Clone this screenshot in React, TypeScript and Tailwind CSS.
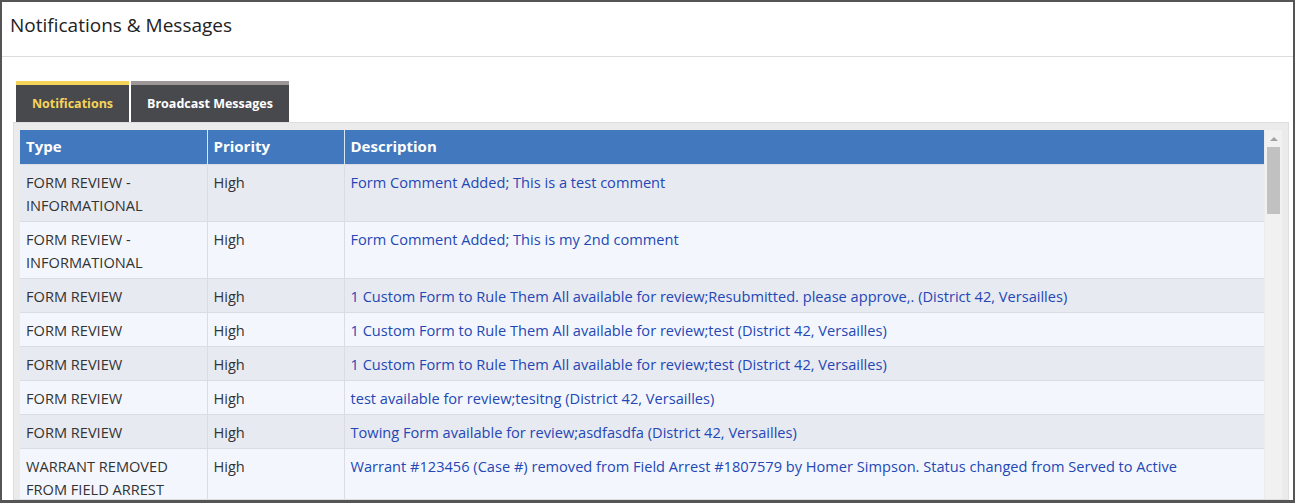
import React from 'react';

type Row = { type: string[]; priority: string; description: string };

const rows: Row[] = [
  { type: ['FORM REVIEW -', 'INFORMATIONAL'], priority: 'High', description: 'Form Comment Added; This is a test comment' },
  { type: ['FORM REVIEW -', 'INFORMATIONAL'], priority: 'High', description: 'Form Comment Added; This is my 2nd comment' },
  { type: ['FORM REVIEW'], priority: 'High', description: '1 Custom Form to Rule Them All available for review;Resubmitted. please approve,. (District 42, Versailles)' },
  { type: ['FORM REVIEW'], priority: 'High', description: '1 Custom Form to Rule Them All available for review;test (District 42, Versailles)' },
  { type: ['FORM REVIEW'], priority: 'High', description: '1 Custom Form to Rule Them All available for review;test (District 42, Versailles)' },
  { type: ['FORM REVIEW'], priority: 'High', description: 'test available for review;tesitng (District 42, Versailles)' },
  { type: ['FORM REVIEW'], priority: 'High', description: 'Towing Form available for review;asdfasdfa (District 42, Versailles)' },
  { type: ['WARRANT REMOVED', 'FROM FIELD ARREST'], priority: 'High', description: 'Warrant #123456 (Case #) removed from Field Arrest #1807579 by Homer Simpson. Status changed from Served to Active' },
];

export default function App() {
  return (
    <div
      className="w-[1295px] h-[503px] overflow-hidden bg-white border-t-2 border-l-2 border-r-2 border-b-[3px] border-[#555555] flex flex-col"
      style={{ fontFamily: '"Open Sans", "Noto Sans", sans-serif' }}
    >
      <div className="h-[55px] shrink-0 border-b border-[#dddddd] pl-[8px] pt-[11px]">
        <h1 className="text-[19px] leading-[24px] text-[#222222]">Notifications &amp; Messages</h1>
      </div>

      <div className="flex gap-[2px] pl-[14px] mt-[24px] shrink-0">
        <div className="w-[113px] h-[41px] border-t-4 border-[#f5d45a] bg-[#48494d] flex items-center justify-center text-[12.5px] font-bold text-[#f5d45a] pt-[2px]">
          Notifications
        </div>
        <div className="w-[158px] h-[41px] border-t-4 border-[#9e9797] bg-[#48494d] flex items-center justify-center text-[12.5px] font-bold text-white pt-[2px]">
          Broadcast Messages
        </div>
      </div>

      <div className="ml-[11px] mr-[4px] flex-1 min-h-0 bg-[#ebebeb] border border-[#dedede] pl-[6px] pt-[7px] pr-[6px] flex gap-[1px]">
        <div className="flex-1 overflow-hidden">
          <table className="w-full border-collapse text-[14.6px] leading-[23px]">
            <thead>
              <tr className="bg-[#4178be] text-white font-bold text-left text-[15px]">
                <th className="w-[187px] h-[34px] px-[6px] border-r border-[#dce6f3]">Type</th>
                <th className="w-[137px] px-[6px] border-r border-[#dce6f3]">Priority</th>
                <th className="px-[6px]">Description</th>
              </tr>
            </thead>
            <tbody>
              {rows.map((r, i) => (
                <tr key={i} className={i % 2 === 0 ? 'bg-[#e8eaf1]' : 'bg-[#f3f7fd]'}>
                  <td className="align-top px-[6px] pt-[6px] pb-[4px] text-[#333333] border-t border-r border-[#dadde3]">
                    {r.type.map((t, j) => (
                      <div key={j}>{t}</div>
                    ))}
                  </td>
                  <td className="align-top px-[6px] pt-[6px] pb-[4px] text-[#333333] border-t border-r border-[#dadde3]">{r.priority}</td>
                  <td className="align-top px-[6px] pt-[6px] pb-[4px] text-[#2447b5] border-t border-[#dadde3]">{r.description}</td>
                </tr>
              ))}
            </tbody>
          </table>
        </div>
        <div className="w-[17px] bg-[#f1f1f1] flex flex-col items-center">
          <div className="h-[17px] flex items-center justify-center">
            <div className="w-0 h-0 border-l-[4px] border-r-[4px] border-b-[4px] border-l-transparent border-r-transparent border-b-[#a3a3a3]" />
          </div>
          <div className="w-[13px] h-[67px] bg-[#c1c1c1]" />
        </div>
      </div>
    </div>
  );
}
